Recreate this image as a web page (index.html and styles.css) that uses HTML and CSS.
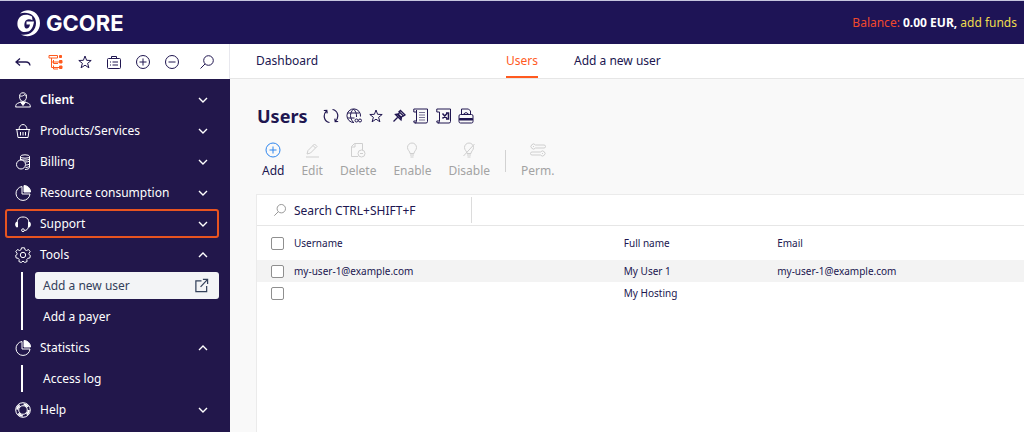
FILE: index.html
```html
<!DOCTYPE html>
<html lang="en">
<head>
  <meta charset="UTF-8" />
  <meta name="viewport" content="width=device-width, initial-scale=1.0"/>
  <title>Users | Gcore</title>
  <link rel="stylesheet" href="styles.css">
</head>
<body>
  <!-- shared icons -->
  <svg class="defs" width="0" height="0">
    <symbol id="down" viewBox="0 0 16 16"><path d="M4 6l4 4 4-4" stroke-width="1.4"/></symbol>
    <symbol id="up" viewBox="0 0 16 16"><path d="M4 10l4-4 4 4" stroke-width="1.4"/></symbol>
    <symbol id="star" viewBox="0 0 16 16"><path d="M8 2l1.6 4.3 4.6.2-3.6 2.8 1.3 4.5L8 11.200l-3.900 2.600 1.300-4.500L1.800 6.500l4.600-.2z"/></symbol>
    <symbol id="search" viewBox="0 0 16 16"><circle cx="9.500" cy="6.500" r="4.800"/><path d="M6 10l-4.500 4.500"/></symbol>
    <symbol id="pie" viewBox="0 0 16 16"><path d="M7 1.500A7 7 0 1 0 15 9H7z"/><path d="M9 .5A6.500 6.500 0 0 1 15.500 7H9z" fill="currentColor"/></symbol>
  </svg>

  <header class="header">
    <a class="logo" href="#">
      <svg width="24" height="28" viewBox="0 0 24 28">
        <path d="M3 4.500C11-3 23 3 23 14S12 30 4 25.500C12 27 19 22 19 14S11 2 3 4.500z" fill="#fff"/>
        <path d="M15 7.500C10 4.500 3 5.500 1 11c-2 6 1 12 7 12 5 0 8-3 9-10.500H9.500v3H13c-.5 3-2 4.500-4 4-2.500-.7-2-7 .5-8.500 1.500-1 4-.8 6 .2z" fill="#fff"/>
      </svg>
      <span>GCORE</span>
    </a>
    <div class="balance">
      <span class="balance-label">Balance:</span> <b>0.00 EUR,</b> <a href="#">add funds</a>
    </div>
  </header>

  <div class="layout">
    <aside class="sidebar">
      <div class="quick">
        <button aria-label="Back"><svg viewBox="0 0 16 16"><path d="M5 4.500L1 8l4 3.500M1 8h10q3.500 0 4 3.500" stroke-width="1.300"/></svg></button>
        <button class="orange" aria-label="Tree"><svg viewBox="0 0 16 16"><path d="M1 1.500h8.500v2.500H1zM3.500 4v9.500H11M3.500 8H11M5.500 6v3.500H10M5.500 11.500v3.500H10"/><path d="M11.500 1.500h2v2h-2zM11.500 6.500h2.500v2.500h-2.500zM11.500 12h2.500v2.500h-2.500z" fill="currentColor"/></svg></button>
        <button aria-label="Favourites"><svg viewBox="0 0 16 16"><use href="#star"/></svg></button>
        <button aria-label="Tasks"><svg viewBox="0 0 16 16"><rect x="1.500" y="4.500" width="13" height="10" rx="1"/><path d="M5.500 4V2.500h5V4M4 8h1M6.500 8H12M4 11h1M6.500 11H12"/></svg></button>
        <button aria-label="Expand"><svg viewBox="0 0 16 16"><circle cx="8" cy="8" r="6.500"/><path d="M8 4.500v7M4.500 8h7"/></svg></button>
        <button aria-label="Collapse"><svg viewBox="0 0 16 16"><circle cx="8" cy="8" r="6.500"/><path d="M4.500 8h7"/></svg></button>
        <button class="find" aria-label="Find"><svg viewBox="0 0 16 16"><use href="#search"/></svg></button>
      </div>

      <nav class="menu">
        <button class="menu-item bold">
          <svg viewBox="0 0 16 16"><path d="M4.500 4.500C4.500 2 6 .8 8 .8s3.500 1.200 3.500 3.700S10 9.500 8 9.500 4.500 7 4.500 4.500zM4.800 4c2 .5 4-.2 4.700-1.500.3 1 .8 1.500 2 1.700M.8 15v-1.500c0-2 3-2.500 5-3.500M15.200 15v-1.500c0-2-3-2.500-5-3.500M.5 15h15"/><path d="M5.500 10h5L8 13.500z" fill="currentColor"/></svg>
          <span>Client</span><svg class="arrow"><use href="#down"/></svg>
        </button>
        <button class="menu-item">
          <svg viewBox="0 0 16 16"><path d="M.8 6.500h14.400M1.800 6.500l1.200 8h10l1.200-8M4 6.500c0-3 2-5 4-5s4 2 4 5M5.500 9v3.500M8 9v3.500M10.500 9v3.500"/></svg>
          <span>Products/Services</span><svg class="arrow"><use href="#down"/></svg>
        </button>
        <button class="menu-item">
          <svg viewBox="0 0 16 16"><circle cx="6" cy="10.500" r="4.500"/><ellipse cx="10" cy="2.500" rx="4.500" ry="1.700"/><path d="M5.500 2.500V6M14.500 2.500v11c0 1-2 2-4.500 2M5.500 5c2 1.500 7 1.500 9 0M10 8c2 0 3.500-.2 4.500-1M11 11c1.500 0 2.500-.3 3.500-1M10.500 13.500c1.500 0 3-.3 4-1"/></svg>
          <span>Billing</span><svg class="arrow"><use href="#down"/></svg>
        </button>
        <button class="menu-item">
          <svg viewBox="0 0 16 16"><use href="#pie"/></svg>
          <span>Resource consumption</span><svg class="arrow"><use href="#down"/></svg>
        </button>
        <button class="menu-item marked">
          <svg viewBox="0 0 16 16"><path d="M2.500 11C1 3 4 1 8 1s7 2 5.500 10M13.500 10c0 3-2 4.500-4 4.500"/><path d="M1 6.500h1.500V11H1.500Q0 9 1 6.500zM15 6.500h-1.500V11h1Q16 9 15 6.500z" fill="currentColor"/><circle cx="8" cy="14.200" r="1.400"/></svg>
          <span>Support</span><svg class="arrow"><use href="#down"/></svg>
        </button>
        <button class="menu-item">
          <svg viewBox="0 0 16 16"><path d="M6.500.8h3l.5 2 1.500.7 2-1 1.700 2.200-1.300 1.600.3 1.500 1.200.7-.6 2.500-2 .3-1 1.300.3 1.900-2.300 1L8 14.100l-1.800 1.400-2.300-1 .3-1.900-1-1.300-2-.3-.6-2.500 1.200-.7.3-1.500L.8 4.700l1.700-2.200 2 1L6 2.800z"/><circle cx="8" cy="8" r="2.700"/></svg>
          <span>Tools</span><svg class="arrow"><use href="#up"/></svg>
        </button>
        <div class="submenu">
          <a class="active" href="#">Add a new user
            <svg viewBox="0 0 16 16"><path d="M8 3H2v11.500h11.500V8.500M7 9.500l7-7.500M9.500 1.500h5v5" stroke-width="1.300"/></svg>
          </a>
          <a href="#">Add a payer</a>
        </div>
        <button class="menu-item">
          <svg viewBox="0 0 16 16"><use href="#pie"/></svg>
          <span>Statistics</span><svg class="arrow"><use href="#up"/></svg>
        </button>
        <div class="submenu">
          <a href="#">Access log</a>
        </div>
        <button class="menu-item">
          <svg viewBox="0 0 16 16"><circle cx="8" cy="8" r="7.300"/><circle cx="8" cy="8" r="4.300"/><circle cx="8" cy="8" r="5.800" stroke-width="2" stroke-dasharray="5 4.100"/></svg>
          <span>Help</span><svg class="arrow"><use href="#down"/></svg>
        </button>
      </nav>
    </aside>

    <main class="main">
      <nav class="tabs">
        <a class="dashboard" href="#">Dashboard</a>
        <a class="current" href="#">Users</a>
        <a href="#">Add a new user</a>
      </nav>

      <section class="content">
        <div class="title">
          <h1>Users</h1>
          <div class="title-icons">
            <button aria-label="Refresh"><svg viewBox="0 0 16 16"><path d="M6.500 14.500C1 13.500-.5 7 3.500 2.800M.8 2.500l3-.2.400 3M9.500 1.500c5.500 1 7 7.500 3 11.700M15.200 13.500l-3 .2-.4-3" stroke-width="1.200"/></svg></button>
            <button aria-label="Language"><svg viewBox="0 0 16 16"><path d="M8 14.500A6.800 6.800 0 1 1 14.500 8.500M7.500 1c-4 4-4 9 0 13.500M7.500 1c2.500 2.500 3.200 5 3 8M1.500 5h12M1.500 10h7"/><circle cx="10.500" cy="12.500" r="1.500"/><circle cx="14" cy="12.500" r="1.500"/></svg></button>
            <button aria-label="Add to favourites"><svg viewBox="0 0 16 16"><use href="#star"/></svg></button>
            <button aria-label="Pin"><svg viewBox="0 0 16 16"><path d="M9.500 2.500L14 7l-1.500 1L8 3.800zM8.500 4.500L7 7l2.500 2.500L12 8M4.500 6.500l5.500 5.500.5-2.500L7 6zM6.500 9.500l-4 4" stroke-width="1.300"/></svg></button>
            <button aria-label="Report"><svg viewBox="0 0 16 16"><path d="M3.500 4V13.500q0 1.500-1.500 1.500T.8 13H3M3.500 4H.8V1h13.700v12.500q0 1.500-1.500 1.500H2M3.500 4V2"/><path d="M6 4.500h6M6 7h6M6 9.500h6M6 12h6" stroke-width=".6"/></svg></button>
            <button aria-label="Export"><svg viewBox="0 0 16 16"><path d="M3.500 4V13.500q0 1.500-1.500 1.500T.8 13H3M3.500 4H.8V1h13.700v12.500q0 1.500-1.500 1.500H2"/><path d="M6.500 5.500l4.500 5M11 5.500l-4.500 5M10 5h2.500v6H10" stroke-width="1.500"/></svg></button>
            <button aria-label="Print"><svg viewBox="0 0 16 16"><path d="M3.500 6V1h7l2 2v3M5.500 6q2.500-3 5 0"/><rect x="1" y="6.500" width="14" height="8.500" rx="1.500"/><path d="M1.500 10.500h13v1.500h-13z" fill="currentColor"/></svg></button>
          </div>
        </div>

        <div class="actions">
          <button class="add"><svg viewBox="0 0 16 16"><circle cx="8" cy="8" r="7"/><path d="M8 4.500v7M4.500 8h7"/></svg>Add</button>
          <button disabled><svg viewBox="0 0 16 16"><path d="M3 12l1-3.500L10.500 2l2.500 2.500L6.500 11zM9 3.500L11.500 6M2 15h13"/></svg>Edit</button>
          <button disabled><svg viewBox="0 0 16 16"><path d="M8 14.500H1.500V4.500l3-3h8V8M5 1.500V5H1.500"/><circle cx="11.500" cy="11.500" r="3.500"/><path d="M10 11.500h3"/></svg>Delete</button>
          <button disabled><svg viewBox="0 0 16 16"><path d="M6 11.500C6 9 3.500 8.500 3.500 5.500a4.500 4.500 0 0 1 9 0c0 3-2.500 3.500-2.500 6zM6 13h4M6.500 15h3"/></svg>Enable</button>
          <button disabled><svg viewBox="0 0 16 16"><path d="M6 11.500C6 9 3.500 8.500 3.500 5.500a4.500 4.500 0 0 1 9 0c0 3-2.500 3.500-2.500 6zM6 13h4M6.500 15h3M2.500 14l11-12"/></svg>Disable</button>
          <span class="divider"></span>
          <button disabled><svg viewBox="0 0 16 16"><path d="M5.500 3H14q1.500 0 1.500 1.500T14 6H5.500A2.500 2.500 0 1 1 5.500 3zM10.500 10H2Q.5 10 .5 11.500T2 13h8.500a2.500 2.500 0 1 0 0-3z"/><path d="M3 4.500h1M12 11.500h1"/></svg>Perm.</button>
        </div>

        <div class="card">
          <div class="search">
            <label for="search-input" aria-label="Search"><svg viewBox="0 0 16 16"><use href="#search"/></svg></label>
            <input type="text" id="search-input" placeholder="Search CTRL+SHIFT+F" />
          </div>
          <table>
            <thead>
              <tr>
                <th class="check"><input type="checkbox" aria-label="Select all" /></th>
                <th class="username">Username</th>
                <th class="fullname">Full name</th>
                <th>Email</th>
              </tr>
            </thead>
            <tbody>
              <tr class="hover">
                <td class="check"><input type="checkbox" aria-label="Select My User 1" /></td>
                <td>my-user-1@example.com</td>
                <td>My User 1</td>
                <td>my-user-1@example.com</td>
              </tr>
              <tr>
                <td class="check"><input type="checkbox" aria-label="Select My Hosting" /></td>
                <td></td>
                <td>My Hosting</td>
                <td></td>
              </tr>
            </tbody>
          </table>
        </div>
      </section>
    </main>
  </div>
</body>
</html>
```
FILE: styles.css
```css
* {
  box-sizing: border-box;
}

body {
  margin: 0;
  min-height: 100vh;
  display: flex;
  flex-direction: column;
  font-family: 'Noto Sans', 'Open Sans', sans-serif;
  font-size: 12px;
  color: #201650;
  background-color: #f9f9f9;
}

.defs {
  position: absolute;
}

a {
  color: inherit;
  text-decoration: none;
}

button {
  padding: 0;
  border: none;
  background: none;
  font: inherit;
  color: inherit;
  cursor: pointer;
}

svg {
  display: block;
  flex-shrink: 0;
  fill: none;
  stroke: currentColor;
  stroke-width: 1;
}

.header {
  display: flex;
  align-items: center;
  justify-content: space-between;
  height: 44px;
  padding: 0 7px 0 17px;
  border-top: 1px solid #c6c6de;
  background-color: #1e1456;
  color: #fff;
}

.logo {
  display: flex;
  align-items: center;
  gap: 5px;
  font-family: Inter, sans-serif;
  font-size: 22px;
  font-weight: 700;
}

.logo svg {
  stroke: none;
}

.balance-label {
  color: #f0492c;
}

.balance a {
  color: #f0dc4e;
}

.layout {
  display: flex;
  flex: 1;
}

.sidebar {
  width: 230px;
  flex-shrink: 0;
  background-color: #22174b;
  color: #fff;
}

.quick {
  display: flex;
  align-items: center;
  gap: 13px;
  height: 35px;
  padding: 0 14px 0 15px;
  background-color: #fff;
  color: #201650;
  border-right: 1px solid #e8e8ee;
}

.quick button:first-child {
  margin-right: 4px;
}

.quick .find {
  margin-left: auto;
}

.quick svg {
  width: 16px;
  height: 16px;
}

.quick .orange {
  color: #ff5a1f;
}

.menu {
  padding: 5px 11px 5px 5px;
}

.menu-item {
  display: flex;
  align-items: center;
  gap: 9px;
  width: 100%;
  height: 31px;
  padding: 0 8px 0 10px;
  text-align: left;
}

.menu-item svg {
  width: 16px;
  height: 16px;
}

.menu-item span {
  flex: 1;
}

.menu-item.bold {
  font-weight: 600;
}

.menu-item.marked {
  height: 29px;
  margin: 1px 0;
  padding: 0 6px 0 8px;
  border: 2px solid #e85420;
  border-radius: 3px;
}

.submenu {
  margin: 2px 0 2px 16px;
  padding-left: 12px;
  border-left: 2px solid #fff;
}

.submenu a {
  display: flex;
  align-items: center;
  justify-content: space-between;
  height: 27px;
  margin-bottom: 4px;
  padding: 0 10px 0 8px;
  border-radius: 3px;
}

.submenu a:last-child {
  margin-bottom: 0;
}

.submenu .active {
  background-color: #f3f4f6;
  color: #33405a;
}

.submenu svg {
  width: 15px;
  height: 15px;
}

.main {
  flex: 1;
  min-width: 0;
}

.tabs {
  display: flex;
  height: 35px;
  padding-left: 26px;
  gap: 36px;
  background-color: #fff;
  border-bottom: 1px solid #e6e6e6;
}

.tabs a {
  display: flex;
  align-items: center;
  height: 34px;
  border-bottom: 2px solid transparent;
}

.tabs .dashboard {
  width: 214px;
}

.tabs .current {
  color: #ff5a1f;
  border-color: #ff5a1f;
}

.content {
  padding: 24px 0 0 26px;
}

.title {
  display: flex;
  align-items: center;
  gap: 16px;
}

h1 {
  margin: 0;
  padding-left: 1px;
  font-size: 18px;
  line-height: 26px;
  font-weight: 700;
}

.title-icons {
  display: flex;
  justify-content: space-between;
  width: 151px;
}

.title-icons svg {
  width: 16px;
  height: 16px;
}

.actions {
  display: flex;
  align-items: center;
  gap: 17px;
  margin: 13px 0 14px;
  padding-left: 6px;
}

.actions button {
  display: flex;
  flex-direction: column;
  align-items: center;
  gap: 4px;
  line-height: 18px;
}

.actions button:disabled {
  color: #a3a3a3;
  cursor: default;
}

.actions svg {
  width: 16px;
  height: 16px;
}

.actions button:disabled svg {
  color: #cfcfcf;
}

.actions .add svg {
  color: #2f86ee;
}

.divider {
  width: 1px;
  height: 22px;
  margin: 0 -2px;
  background-color: #d2d2d2;
}

.card {
  min-height: 238px;
  background-color: #fff;
  border: 1px solid #ebebeb;
  border-width: 1px 0 0 1px;
}

.search {
  display: flex;
  align-items: center;
  height: 31px;
  padding-left: 16px;
  gap: 7px;
  border-bottom: 1px solid #e6e6e6;
}

.search svg {
  width: 14px;
  height: 14px;
  color: #8a8a8a;
}

.search input {
  width: 178px;
  height: 26px;
  padding: 0;
  border: none;
  border-right: 1px solid #dcdcdc;
  outline: none;
  font: inherit;
  color: inherit;
}

.search input::placeholder {
  color: #201650;
  opacity: 1;
}

table {
  width: 100%;
  table-layout: fixed;
  border-collapse: collapse;
  font-size: 10px;
}

th, td {
  height: 22px;
  padding: 0;
  text-align: left;
  font-weight: 400;
}

th {
  height: 34px;
}

.check {
  width: 37px;
  padding-left: 14px;
}

.username {
  width: 43%;
}

.fullname {
  width: 20%;
}

.check input {
  display: block;
  appearance: none;
  width: 13px;
  height: 13px;
  margin: 0;
  border: 1px solid #8f8f8f;
  border-radius: 2px;
  background-color: #fff;
}

.hover {
  background-color: #f3f3f3;
}
```
